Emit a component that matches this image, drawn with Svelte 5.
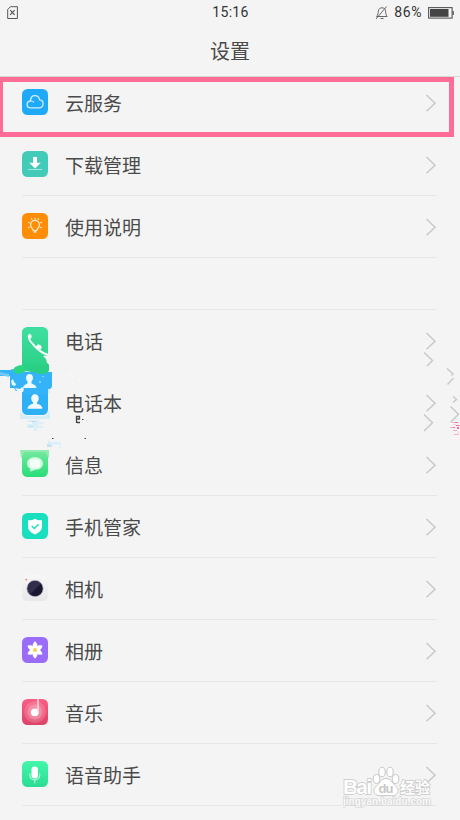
<script>
  const groups = [
    [
      { icon: 'cloud', label: '云服务' },
      { icon: 'download', label: '下载管理' },
      { icon: 'guide', label: '使用说明' }
    ],
    [
      { icon: 'phone', label: '电话', noLine: true },
      { icon: 'contacts', label: '电话本', noLine: true },
      { icon: 'message', label: '信息' },
      { icon: 'shield', label: '手机管家' },
      { icon: 'camera', label: '相机' },
      { icon: 'album', label: '相册' },
      { icon: 'music', label: '音乐' },
      { icon: 'voice', label: '语音助手' }
    ]
  ];
  const petals = [0, 60, 120, 180, 240, 300];
</script>

<div class="screen">
  <header>
    <div class="status">
      <svg class="sim" width="12" height="14" viewBox="0 0 12 14" fill="none" stroke="#555">
        <path d="M3.5 .7H10.4V12.5H.7V3.5Z" />
        <path d="M3.2 4.2l4.4 4.6M7.6 4.2L3.2 8.8" stroke-width="1.2" />
      </svg>
      <span class="time">15:16</span>
      <div class="right">
        <svg width="14" height="14" viewBox="0 0 14 14" fill="none" stroke="#666">
          <path d="M1.5 10.5H12.2C10.7 9 10.8 7 10.5 4.8C10.2 2.7 8.8 1.8 7 1.8S3.7 2.7 3.4 4.8C3.1 7 3 9 1.5 10.5M5.5 12.5h3M1 13L11.5 .6" />
        </svg>
        <span class="percent">86%</span>
        <svg width="26" height="12" viewBox="0 0 26 12">
          <rect x=".6" y=".6" width="23.5" height="10.5" fill="#f5f5f5" stroke="#555" stroke-width="1.1" />
          <rect x="2" y="2" width="18.5" height="7.8" fill="#444" />
          <path d="M24.5 4h1.3v4h-1.3z" fill="#555" />
        </svg>
      </div>
    </div>
    <h1>设置</h1>
  </header>

  <main>
    {#each groups as items}
      <ul>
        {#each items as item}
          <li class:no-line={item.noLine}>
            <svg class="icon" width="26" height="26" viewBox="0 0 26 26" fill="none">
              {#if item.icon == 'cloud'}
                <rect width="26" height="26" rx="5.5" fill="#1eaaf8" />
                <path d="M8.6 18.9C6.5 18.9 5.1 17.5 5.1 15.5c0-2 1.4-3.4 3.4-3.5C8.6 8.7 10.6 6.7 13 6.7c2.4 0 4.2 1.7 4.6 4.2 2.1.2 3.5 1.8 3.5 3.9 0 2.4-1.8 4.1-4 4.1z" stroke="#d3eeff" stroke-width="1.3" />
                <path d="M8.5 12c1.6-.2 2.7.3 3.5 1.4" stroke="#d3eeff" stroke-width="1.1" />
              {:else if item.icon == 'download'}
                <rect width="26" height="26" rx="5.5" fill="#43cbb9" />
                <path d="M11 6h4v5.8h3.8L13 17.6 7.2 11.8H11z" fill="#fff" />
                <path d="M6 18.5h14" stroke="#a5e6dd" />
              {:else if item.icon == 'guide'}
                <rect width="26" height="26" rx="5.5" fill="#ff8d05" />
                <path d="M11.3 17.6c0-1.6-2.7-2.8-2.7-5.9a4.4 4.4 0 0 1 8.800 0c0 3.100-2.700 4.300-2.700 5.900zM11.800 19.200h2.400" stroke="#fff0d9" stroke-width="1.200" />
                <path d="M9.300 5.100l.7 1.700M13 4.800v1.700M16.700 5.100L16 6.800M6 9.200l1.700.7M20 9.200l-1.700.7M6 14.800l1.700-.7M20 14.800l-1.700-.7" stroke="#ffe5bd" stroke-width="1.200" />
              {:else if item.icon == 'phone'}
                <rect width="26" height="26" rx="5.500" fill="#36dca0" />
              {:else if item.icon == 'contacts'}
                <rect width="26" height="26" rx="5.500" fill="#2eb0f6" />
                <path d="M13 5.200c2.400 0 3.800 1.700 3.800 4 0 2-1 3.300-1.800 4.100v1.400c2.700.8 5.200 1.700 5.400 5H5.600c.2-3.300 2.700-4.200 5.400-5v-1.400c-.8-.8-1.800-2.100-1.800-4.100 0-2.300 1.400-4 3.800-4z" fill="#f0f9ff" />
              {:else if item.icon == 'message'}
                <linearGradient id="messageFill" x2="0" y2="1"><stop stop-color="#73e99d" /><stop offset="1" stop-color="#28dd78" /></linearGradient>
                <rect width="26" height="26" rx="5.500" fill="url(#messageFill)" />
                <path d="M13 6.200c4.500 0 8 2.700 8 6.300s-3.500 6.200-7.400 6.200c-1.200 0-1.800.2-2.600.7-1 .7-2.100 1.100-3.200.9.600-.9.700-1.700.6-2.500C6.400 16.800 5 14.900 5 12.500c0-3.600 3.500-6.300 8-6.300z" fill="#d2fbe0" />
                <rect x="8" y="8.500" width="10" height="8" rx="1" fill="#f3fff6" />
              {:else if item.icon == 'shield'}
                <rect width="26" height="26" rx="5.500" fill="#19dfbf" />
                <path d="M6 7.300C9 7.500 11 7 13 5.700c2 1.300 4 1.800 7 1.600v6.200c0 3.900-3 6.300-7 8-4-1.700-7-4.100-7-8z" fill="#fff" />
                <path d="M9.700 13l2.600 2.500 4.300-4.300" stroke="#20dfc0" stroke-width="1.500" />
              {:else if item.icon == 'camera'}
                <linearGradient id="cameraFill" x2="0" y2="1"><stop stop-color="#f7f7f7" /><stop offset="1" stop-color="#e8e8ea" /></linearGradient>
                <linearGradient id="lensFill" x2="1" y2="1"><stop stop-color="#292847" /><stop offset=".5" stop-color="#33304e" /><stop offset=".55" stop-color="#1a1831" /></linearGradient>
                <rect width="26" height="26" rx="5.500" fill="url(#cameraFill)" />
                <circle cx="13" cy="13.500" r="8.200" fill="url(#lensFill)" stroke="#c8c7ce" stroke-width=".7" />
                <circle cx="4.200" cy="4.600" r=".9" fill="#ef725e" />
              {:else if item.icon == 'album'}
                <rect width="26" height="26" rx="5.500" fill="#996cf9" />
                {#each petals as angle}
                  <path d="M13 13C9.700 10 9.900 7.300 13 4.300c3.100 3 3.300 5.700 0 8.700z" fill="#fff" transform="rotate({angle} 13 13)" />
                {/each}
                <circle cx="13" cy="13" r="2" fill="#f8cf4a" />
              {:else if item.icon == 'music'}
                <linearGradient id="musicFill" x2="0" y2="1"><stop stop-color="#fb5e85" /><stop offset="1" stop-color="#df4268" /></linearGradient>
                <rect width="26" height="26" rx="5.500" fill="url(#musicFill)" />
                <circle cx="13" cy="13" r="10.800" fill="#fff" opacity=".16" />
                <circle cx="13" cy="13" r="7.500" fill="#fff" opacity=".22" />
                <circle cx="12.800" cy="13.300" r="3.900" fill="#fff" />
                <path d="M16 0v13" stroke="#ffdce5" stroke-width="1.500" />
              {:else if item.icon == 'voice'}
                <linearGradient id="voiceFill" x2="0" y2="1"><stop stop-color="#42f7aa" /><stop offset="1" stop-color="#2cdc94" /></linearGradient>
                <rect width="26" height="26" rx="5.500" fill="url(#voiceFill)" />
                <rect x="9.500" y="5.500" width="6.500" height="12" rx="3.250" fill="#fff" />
                <path d="M7.800 12.500v2a5 5 0 0 0 9.900 0v-2M12.750 19.300v3" stroke="#b9f9dc" stroke-width="1.200" />
              {/if}
            </svg>
            <span class="label">{item.label}</span>
            <svg class="arrow" width="12" height="18" viewBox="0 0 12 18" fill="none" stroke="#c9c9c9" stroke-width="1.500">
              <path d="M1.500 1L10 9.300 1.500 17.300" />
            </svg>
          </li>
        {/each}
      </ul>
    {/each}
  </main>

  <!-- smeared pieces around the phone and contacts rows -->
  <svg class="smear" width="460" height="820" viewBox="0 0 460 820" fill="none">
    <linearGradient id="phoneFill" x2="0" y2="1"><stop stop-color="#40dfa1" /><stop offset="1" stop-color="#28ce82" /></linearGradient>
    <path d="M22 333.500q0-5.500 5.500-5.500h15q5.500 0 5.500 5.500V363l1 2v6l-2 1v2H35l-4-2-9-2z" fill="url(#phoneFill)" />
    <path d="M28 335c-.8 2.800.6 5.500 2.500 7.800l3.500 4.200c3 3 6.500 6 10.500 7.700l3.500.8v-1.800l-2-.8c-2.500-.7-3.800-2-5.700-3.200l1.600-2.200-1.200-2.200-2.700-1-1.800 2-3-3.200c-1.600-1.600-2.200-2.500-3-4l1.500-1.900-.4-2.100-1.300-1.300z" fill="#f5fff9" />
    <path d="M43 356l3 3 1 4 2 1v-9z" fill="#f5f5f5" />
    <path d="M0 370h10l3-1 3 2h7l4 1h10l5 2h5v-2h5v15l-2 2h-2v5H22v-3h-6l-2-3h-4v-12H0z" fill="#35b3f8" />
    <path d="M0 372l4 1 5 1v3l-4-1-5-1z" fill="#73c9f6" />
    <path d="M22 365h27v5l-2 2v1h-5v1l-6-1-4-2-5-3-5-1z" fill="#29cf84" />
    <path d="M13 370l2-3 5-2 4 1 2 4-2 2-5 2-4-1z" fill="#2bd582" />
    <path d="M11 381l2-2 1 3 2 2-1 2-3-1zM15 388l5 1 2-2 2 2-1 3h-5z" fill="#ecf8fd" />
    <path d="M29.500 374c2 0 3.500 1.500 3.500 4 0 1.500-.7 2.500-1.500 3.500v2c2 1 4.500 1.200 5 4.500H23c.2-3 3-3.500 4.500-4.500v-2c-1-1-1.500-2-1.500-3.500 0-2.500 1.500-4 3.500-4z" fill="#ecf9ff" />
    <path d="M39 381h2v2h-2zM42 376h2v1h-2z" fill="#86d3fa" />
    <path d="M48 389v4h2v-4z" fill="#d4effb" />
    <path d="M20 411c1 3 5 5 8 5h15c4 0 6-3 6-5h1v8H20z" fill="#d6edf7" />
    <path d="M27 420h12v2h5v2h-5v2h4v2h-6v3h-3v-3h-7v-4h5v-2h-5z" fill="#dceff8" />
    <path d="M31 421h5v1h-5zM29 426h4v1h-4z" fill="#b5ddf2" />
    <path d="M48 438v4h13v3h-9v2H47v-3h2" fill="#c4e4f4" />
    <path d="M50 442h11v3H50zM59 446h2v2h-2z" fill="#ddf0fa" />
    <path d="M20 450h29v8l-1-1c0-3-2-5-6-5H27c-3 0-5 2-5 5l-1 1z" fill="#93ebb3" />
    <path d="M76.500 423v-6.500h3v2.500h-2.500M77 422.500h3" stroke="#444" stroke-width="1.300" />
    <path d="M82 419.500h1.500M52 438.500h1.500M84.500 438.500h1.500" stroke="#444" />
    <path d="M72 383h2M78 380l3 2M64 377h2M68 374h4" stroke="#fafafa" />
    <g stroke="#c9c9c9" stroke-width="1.500">
      <path d="M424 352.500l8.500 8L427 366" />
      <path d="M424 414.500l8.500 8.300-8.500 8.200" />
      <path d="M447 368.500l6 5.500-1.500 1.500M453.500 378l-6 6.500" />
      <path d="M453 396.500l3.500 3-3.500 3" />
      <path d="M450.500 406.500l8 7.700-8 8" />
    </g>
    <path d="M452 422h4v1h-4zM457 425h3v1h-3zM450 427h4v1h-4zM453 430h4v1h-4zM454 434h5v1h-5z" fill="#f7aec2" />
    <path d="M455 422h3v1h-3zM456 425h3v1h-3zM457 427h2v2h-2zM453 427h2v1h-2z" fill="#ee7094" />
    <path d="M453 424h3v1h-3zM458 431h1v4h-1z" fill="#fad1dc" />
  </svg>

  <div class="highlight"></div>

  <div class="watermark">
    <svg width="90" height="60" viewBox="0 0 90 60" fill="#fff" stroke="#c8c8c8">
      <g class="brand">
        <text x="0" y="31" textLength="29">Bai</text>
        <text class="exp" x="57" y="30" textLength="30">经验</text>
      </g>
      <ellipse cx="33.500" cy="16" rx="3.300" ry="4.500" />
      <ellipse cx="39" cy="9" rx="3.200" ry="4.700" />
      <ellipse cx="47" cy="9" rx="3.200" ry="4.700" />
      <ellipse cx="52.500" cy="16" rx="3.300" ry="4.500" />
      <path d="M43 15.500c5 0 6 4 9 7 3 3 4 5 2 8s-5 2-11 2-9 1-11-2-1-5 2-8c3-3 4-7 9-7z" />
      <text class="du" x="35.500" y="30" textLength="15">du</text>
      <text class="site" x="0" y="42" textLength="88">jingyan.baidu.com</text>
    </svg>
  </div>
</div>

<style>
  :global(body) {
    background: #f4f4f4;
  }

  .screen {
    position: relative;
    height: 820px;
    overflow: hidden;
    background: #f4f4f4;
    color: #4a4a4a;
    font-family: "Noto Sans CJK SC", sans-serif;
  }

  header {
    box-sizing: border-box;
    height: 77px;
    border-bottom: 1px solid #d5d8d7;
  }

  .status {
    display: grid;
    grid-template-columns: 1fr auto 1fr;
    align-items: center;
    height: 25px;
    padding: 0 6px 0 7px;
    font: 14px/25px Roboto, sans-serif;
    letter-spacing: .3px;
    color: #333;
  }

  .right {
    display: flex;
    align-items: center;
    justify-content: flex-end;
  }

  .percent {
    margin: 0 6px 0 5px;
    letter-spacing: .6px;
  }

  h1 {
    margin: 0;
    text-align: center;
    font-size: 20px;
    font-weight: 400;
    line-height: 51px;
  }

  main {
    margin-top: -5px;
  }

  ul {
    margin: 0 23px 0 22px;
    padding: 0;
    list-style: none;
  }

  ul + ul {
    padding-top: 51px;
  }

  ul + ul::before {
    content: "";
    display: block;
    height: 1px;
    background: #e7e7e7;
  }

  li {
    display: flex;
    align-items: center;
    box-sizing: border-box;
    height: 62px;
    padding-bottom: 1px;
    border-bottom: 1px solid #e7e7e7;
  }

  .no-line {
    border-color: transparent;
  }

  .label {
    flex: 1;
    margin-left: 17px;
    padding-top: 2px;
    font-size: 19px;
    line-height: 28px;
  }

  .arrow {
    margin-top: 2px;
  }

  .smear {
    position: absolute;
    top: 0;
    left: 0;
    pointer-events: none;
  }

  .highlight {
    position: absolute;
    top: 77px;
    left: -2px;
    box-sizing: border-box;
    width: 456px;
    height: 60px;
    border: 5px solid #ff6c96;
  }

  .watermark {
    position: absolute;
    top: 763px;
    left: 343px;
  }

  .watermark text {
    font-family: "Liberation Sans", "Noto Sans CJK SC", sans-serif;
    font-weight: 700;
    paint-order: stroke;
    stroke-width: 1.5px;
  }

  .brand {
    font-size: 21px;
  }

  .watermark .exp {
    font-size: 15px;
  }

  .watermark .du {
    font-size: 13px;
    fill: #c8c8c8;
    stroke: none;
  }

  .watermark .site {
    font-size: 10px;
    stroke-width: 1.5px;
    stroke: #d6d6d6;
    fill: #fafafa;
  }
</style>
